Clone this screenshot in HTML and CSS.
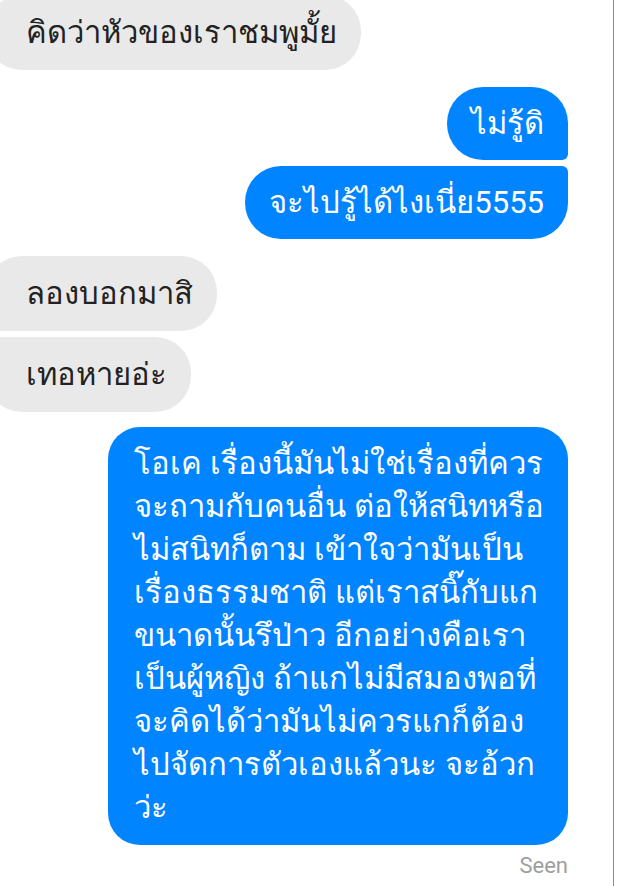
FILE: index.html
```html
<!DOCTYPE html>
<html lang="th">

<head>
    <meta charset="UTF-8">
    <meta name="viewport" content="width=device-width, initial-scale=1.0">
    <title>แชท</title>
    <link rel="stylesheet" href="styles.css">
</head>

<body>
    <div class="screen">
        <div class="thread">
            <div class="group in">
                <div class="bubble only">คิดว่าหัวของเราชมพูมั้ย</div>
            </div>

            <div class="group out">
                <div class="bubble first">ไม่รู้ดิ</div>
                <div class="bubble last">จะไปรู้ได้ไงเนี่ย5555</div>
            </div>

            <div class="group in">
                <div class="bubble first">ลองบอกมาสิ</div>
                <div class="bubble last">เทอหายอ่ะ</div>
            </div>

            <div class="group out tail">
                <div class="bubble only long">โอเค เรื่องนี้มันไม่ใช่เรื่องที่ควร<br>จะถามกับคนอื่น ต่อให้สนิทหรือ<br>ไม่สนิทก็ตาม เข้าใจว่ามันเป็น<br>เรื่องธรรมชาติ แต่เราสนิ๊กับแก<br>ขนาดนั้นรึป่าว อีกอย่างคือเรา<br>เป็นผู้หญิง ถ้าแกไม่มีสมองพอที่<br>จะคิดได้ว่ามันไม่ควรแกก็ต้อง<br>ไปจัดการตัวเองแล้วนะ จะอ้วก<br>ว่ะ</div>
                <div class="seen">Seen</div>
            </div>
        </div>
    </div>
</body>

</html>
```

FILE: styles.css
```css
body {
    margin: 0;
    padding: 0;
    background-color: #fff;
    font-family: Roboto, sans-serif;
}

.screen {
    width: 613px;
    height: 886px;
    border-right: 1px solid #8c8c8c;
    overflow: hidden;
}

.thread {
    display: flex;
    flex-direction: column;
    margin-top: -5px;
    padding-right: 45px;
}

.group {
    display: flex;
    flex-direction: column;
    gap: 6px;
}

.group + .group {
    margin-top: 17px;
}

.group.tail {
    margin-top: 15px;
}

.group.in {
    align-items: flex-start;
}

.group.out {
    align-items: flex-end;
}

.bubble {
    font-size: 31px;
    line-height: 43px;
    padding: 15px 24px;
    border-radius: 36px;
    white-space: nowrap;
}

.in .bubble {
    margin-left: -14px;
    padding: 16px 24px 16px 40px;
    background-color: #e9e9e9;
    color: #222;
}

.out .bubble {
    background-color: #0084ff;
    color: #fff;
}

/* มุมที่ติดกันในกลุ่มเดียวกัน */
.in .first {
    border-bottom-left-radius: 6px;
}

.in .last {
    border-top-left-radius: 6px;
}

.out .first {
    border-bottom-right-radius: 6px;
}

.out .last {
    border-top-right-radius: 6px;
}

.bubble.long {
    padding: 15px 24px 16px 26px;
    border-radius: 32px;
}

.seen {
    margin-top: 2px;
    font-family: Roboto, sans-serif;
    font-size: 22px;
    color: #9e9e9e;
}
```
